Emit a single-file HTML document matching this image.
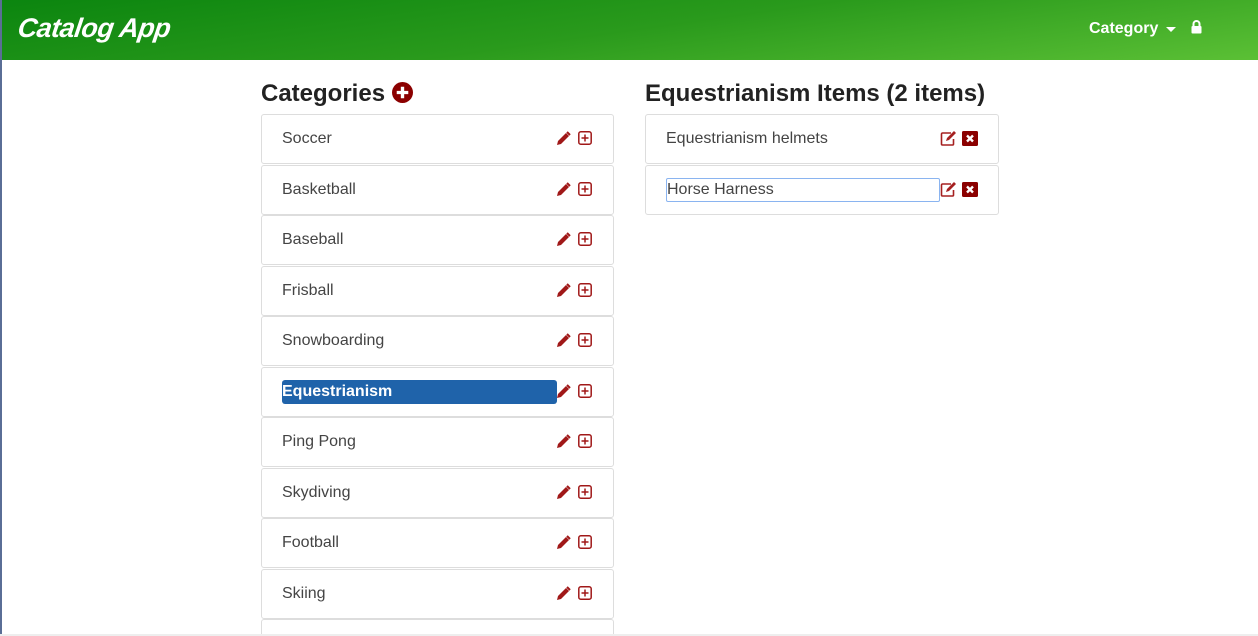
<!DOCTYPE html>
<html style="overflow:hidden;height:636px"><head><meta charset="utf-8"><style>
html,body{margin:0;width:1258px;height:636px;overflow:hidden}
body{background:#fff;font-family:"Liberation Sans",sans-serif;position:relative}
.bl{position:absolute;left:0;top:0;width:2px;height:636px;background:#5a6e96}
.bb{position:absolute;left:0;top:634px;width:1258px;height:2px;background:#eee}
.hd{position:absolute;left:0;top:0;width:1258px;height:60px;background:linear-gradient(172deg,#0b850f 0%,#2a9a1c 50%,#5bc035 100%)}
.logo{position:absolute;left:18px;top:13px;color:#fff;font:italic bold 27px "Liberation Sans Narrow","Liberation Sans",sans-serif;letter-spacing:-0.5px;transform:skewX(-8deg)}
.nav{position:absolute;left:1089px;top:20px;color:#fff;font-weight:bold;font-size:16px}
.car{position:absolute;left:1166px;top:27px;border-left:5px solid transparent;border-right:5px solid transparent;border-top:5px solid #fff}
h2{position:absolute;margin:0;font-size:24px;font-weight:bold;color:#222;top:80px}
.row{position:absolute;height:48px;border:1px solid #ddd;border-radius:3px;background:#fff}
.row span.t{position:absolute;left:20px;top:15px;font-size:16px;color:#444}
.ic{position:absolute;top:16px}
.sel{position:absolute;left:20px;top:12px;width:275px;height:24px;background:#1f63aa;border-radius:3px;color:#fff;font-weight:bold;font-size:16px;line-height:24px}
</style></head><body>
<div class="hd"><div class="logo">Catalog App</div><div class="nav">Category</div><div class="car"></div>
<svg style="position:absolute;left:1191px;top:20px" width="11" height="14" viewBox="0 0 11 14"><path d="M2.5 6V4a3 3 0 0 1 6 0v2" fill="none" stroke="#fff" stroke-width="2"/><rect x="0.5" y="6" width="10" height="7.5" rx="1" fill="#fff"/></svg></div>
<div class="bl"></div>
<h2 style="left:261px">Categories <svg style="vertical-align:-2px" width="21" height="21" viewBox="0 0 20 20"><circle cx="10" cy="10" r="10" fill="#8b0000"/><path d="M10 4.5v11M4.5 10h11" stroke="#fff" stroke-width="3.2"/></svg></h2>
<h2 style="left:645px">Equestrianism Items (2 items)</h2>
<div id="cats"></div>
<div class="row" style="left:645px;top:114px;width:352px"><span class="t">Equestrianism helmets</span>
<svg class="ic" style="left:294px" width="17" height="15" viewBox="0 0 17 15"><path d="M11 2H2.5a1 1 0 0 0-1 1v10a1 1 0 0 0 1 1h10a1 1 0 0 0 1-1V8" fill="none" stroke="#a52020" stroke-width="1.6"/><path d="M6 10l1-3 7-7 2 2-7 7z" fill="#a52020"/></svg>
<svg class="ic" style="left:316px" width="16" height="15" viewBox="0 0 16 15"><rect width="16" height="15" rx="1.5" fill="#8b0000"/><path d="M5 4.5l6 6M11 4.5l-6 6" stroke="#fff" stroke-width="2.4"/></svg></div>
<div class="row" style="left:645px;top:165px;width:352px"><span style="position:absolute;left:20px;top:12px;width:272px;height:22px;border:1px solid #8ab4f0;border-radius:2px;font-size:16px;color:#444;line-height:22px">Horse Harness</span>
<svg class="ic" style="left:294px" width="17" height="15" viewBox="0 0 17 15"><path d="M11 2H2.5a1 1 0 0 0-1 1v10a1 1 0 0 0 1 1h10a1 1 0 0 0 1-1V8" fill="none" stroke="#a52020" stroke-width="1.6"/><path d="M6 10l1-3 7-7 2 2-7 7z" fill="#a52020"/></svg>
<svg class="ic" style="left:316px" width="16" height="15" viewBox="0 0 16 15"><rect width="16" height="15" rx="1.5" fill="#8b0000"/><path d="M5 4.5l6 6M11 4.5l-6 6" stroke="#fff" stroke-width="2.4"/></svg></div>
<div class="bb"></div>
<script>
var n=["Soccer","Basketball","Baseball","Frisball","Snowboarding","Equestrianism","Ping Pong","Skydiving","Football","Skiing"];
var h="";n.forEach(function(t,i){var top=Math.round(114+i*50.5);
var txt=t=="Equestrianism"?'<div class="sel">Equestrianism</div>':'<span class="t">'+t+'</span>';
h+='<div class="row" style="left:261px;top:'+top+'px;width:351px">'+txt+
'<svg class="ic" style="left:294px" width="15" height="15" viewBox="0 0 15 15"><path d="M1 14l1-4 8-8 3 3-8 8z" fill="#a01818"/><path d="M11 1l3 3" stroke="#a01818" stroke-width="2"/></svg>'+
'<svg class="ic" style="left:316px" width="14" height="14" viewBox="0 0 14 14"><rect x="0.8" y="0.8" width="12.4" height="12.4" rx="2" fill="none" stroke="#a01818" stroke-width="1.5"/><path d="M7 3.5v7M3.5 7h7" stroke="#a01818" stroke-width="1.5"/></svg></div>';});
h+='<div style="position:absolute;left:261px;top:619px;width:351px;height:15px;border:1px solid #ddd;border-bottom:none;border-radius:3px 3px 0 0"></div>';
document.getElementById("cats").innerHTML=h;
</script>
</body></html>
